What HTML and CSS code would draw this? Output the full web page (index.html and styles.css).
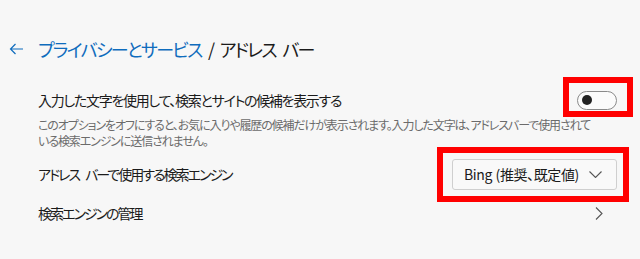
FILE: index.html
```html
<!DOCTYPE html>
<html lang="ja">
<head>
<meta charset="utf-8">
<link rel="stylesheet" href="styles.css">
</head>
<body>
<div class="page">
  <header class="header">
    <span class="back">
      <svg width="15" height="12" viewBox="0 0 15 12"><path d="M14 6H1.5M6.5 1L1.5 6l5 5" fill="none" stroke="#0f6cbd" stroke-width="1.2"/></svg>
    </span>
    <h1 class="title"><span class="crumb">プライバシーとサービス</span> / アドレス バー</h1>
  </header>
  <section class="content">
    <div class="row row-toggle">
      <div class="label">入力した文字を使用して、検索とサイトの候補を表示する</div>
      <div class="toggle"><span class="knob"></span></div>
    </div>
    <p class="desc">このオプションをオフにすると、お気に入りや履歴の候補だけが表示されます。入力した文字は、アドレスバーで使用されている検索エンジンに送信されません。</p>
    <div class="row row-select">
      <div class="label label-tight">アドレス バーで使用する検索エンジン</div>
      <div class="select"><span class="select-text">Bing (推奨、既定値)</span>
        <svg width="13" height="7" viewBox="0 0 13 7"><path d="M0.5 0.5l6 6 6-6" fill="none" stroke="#555" stroke-width="1.1"/></svg>
      </div>
    </div>
    <div class="row row-link">
      <div class="label label-tight">検索エンジンの管理</div>
      <svg class="chev" width="8" height="13" viewBox="0 0 8 13"><path d="M1 0.5l6 6-6 6" fill="none" stroke="#555" stroke-width="1.1"/></svg>
    </div>
  </section>
  <div class="mark mark-toggle"></div>
  <div class="mark mark-select"></div>
</div>
</body>
</html>
```
FILE: styles.css
```css
html, body {
  margin: 0;
  padding: 0;
  background: #f7f7f7;
}
.page {
  position: relative;
  width: 640px;
  height: 259px;
  overflow: hidden;
  font-family: "Noto Sans CJK JP", "Noto Sans", sans-serif;
  font-feature-settings: "palt";
  color: #1b1b1b;
}
.header {
  display: flex;
  align-items: center;
  height: 24px;
  margin-top: 37px;
  padding-left: 9px;
}
.back {
  display: flex;
  width: 29px;
}
.title {
  margin: 0;
  font-size: 18px;
  font-weight: 400;
  line-height: 24px;
  letter-spacing: -1.7px;
  word-spacing: 4px;
  color: #1b1b1b;
}
.crumb {
  color: #0f6cbd;
}
.content {
  padding: 0 23px 0 38px;
  margin-top: 24px;
}
.row {
  display: flex;
  align-items: center;
  justify-content: space-between;
}
.label {
  font-size: 14px;
  line-height: 20px;
  letter-spacing: -1.3px;
  word-spacing: 5px;
}
.label-tight {
  letter-spacing: -2px;
}
.row-toggle {
  height: 30px;
}
.toggle {
  box-sizing: border-box;
  width: 40px;
  height: 19px;
  border: 1px solid #8a8a8a;
  border-radius: 10px;
  background: #fbfbfb;
  display: flex;
  align-items: center;
  padding-left: 4px;
}
.knob {
  width: 10px;
  height: 10px;
  border-radius: 50%;
  background: #222;
}
.desc {
  margin: 2px 0 0;
  width: 553px;
  font-size: 12px;
  line-height: 16px;
  letter-spacing: -1.1px;
  color: #6b6b6b;
}
.row-select {
  height: 32px;
  margin-top: 9px;
}
.select {
  box-sizing: border-box;
  width: 165px;
  height: 31px;
  border: 1px solid #cfcfcf;
  border-radius: 3px;
  background: #f9f9f9;
  display: flex;
  align-items: center;
  justify-content: space-between;
  padding: 0 14px 0 11px;
  font-size: 14px;
  letter-spacing: -0.4px;
  word-spacing: 1px;
}
.row-link {
  height: 30px;
  margin-top: 8px;
}
.chev {
  margin-right: 14px;
}
.mark {
  position: absolute;
  box-sizing: border-box;
  border: 6px solid #ff0000;
}
.mark-toggle {
  left: 563px;
  top: 77px;
  width: 70px;
  height: 40px;
}
.mark-select {
  left: 437px;
  top: 147px;
  width: 192px;
  height: 55px;
}
```
